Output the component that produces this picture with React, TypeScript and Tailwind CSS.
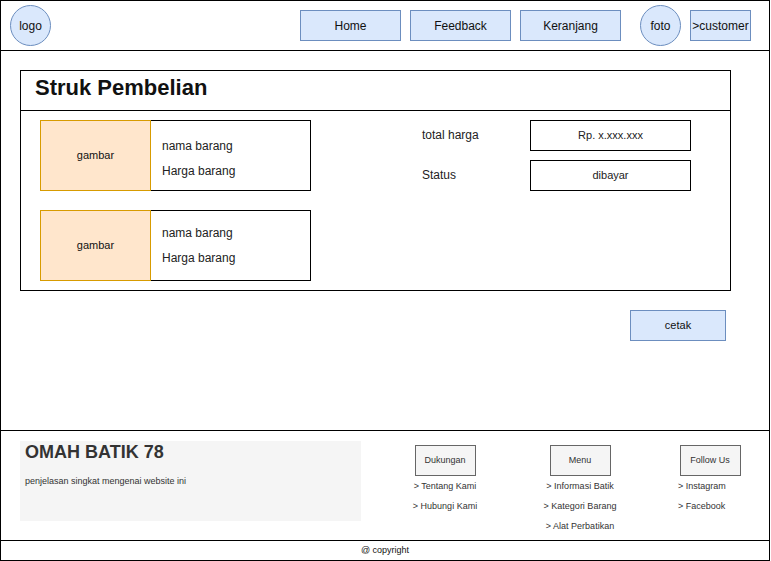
import React from "react";

const font = "font-['Liberation_Sans',Arial,Helvetica,sans-serif]";

function NavBtn({ label, w = "w-[101px]", ml }: { label: string; w?: string; ml: string }) {
  return (
    <div
      className={`${ml} ${w} h-[31px] shrink-0 border border-[#6c8ebf] bg-[#dae8fc] flex items-center justify-center text-[12px] text-[#111]`}
    >
      {label}
    </div>
  );
}

function Circle({ label, ml }: { label: string; ml: string }) {
  return (
    <div
      className={`${ml} w-[41px] h-[41px] shrink-0 rounded-full border border-[#6c8ebf] bg-[#dae8fc] flex items-center justify-center text-[12px] text-[#111]`}
    >
      {label}
    </div>
  );
}

function Item({ shift }: { shift: string }) {
  return (
    <div className="flex h-[71px]">
      <div className="w-[111px] h-[71px] border border-[#d79b00] bg-[#ffe6cc] flex items-center justify-center text-[11px] text-[#111]">
        gambar
      </div>
      <div
        className={`w-[160px] h-[71px] border-y border-r border-black flex flex-col justify-center pl-[11px] ${shift} text-[12px] leading-[25px] text-[#222]`}
      >
        <div>nama barang</div>
        <div>Harga barang</div>
      </div>
    </div>
  );
}

function FooterCol({
  title,
  links,
  ml,
  left,
}: {
  title: string;
  links: string[];
  ml: string;
  left?: boolean;
}) {
  return (
    <div className={`${ml} w-[100px] mt-[14px] flex flex-col items-center`}>
      <div className="w-[61px] h-[31px] border border-[#666666] bg-[#f5f5f5] flex items-center justify-center text-[9px] text-[#333]">
        {title}
      </div>
      <div className={left ? "self-stretch pl-[18px] flex flex-col items-start" : "flex flex-col items-center"}>
        {links.map((l) => (
          <div key={l} className="text-[9px] leading-[20px] text-[#333] whitespace-nowrap">
            {l}
          </div>
        ))}
      </div>
    </div>
  );
}

export default function App() {
  return (
    <div className={`${font} w-[770px] h-[561px] border border-black bg-white flex flex-col text-black`}>
      {/* Header */}
      <div className="h-[50px] shrink-0 border-b border-black flex items-center">
        <Circle label="logo" ml="ml-[9px]" />
        <NavBtn label="Home" ml="ml-[249px]" />
        <NavBtn label="Feedback" ml="ml-[9px]" />
        <NavBtn label="Keranjang" ml="ml-[9px]" />
        <Circle label="foto" ml="ml-[19px]" />
        <NavBtn label=">customer" w="w-[61px]" ml="ml-[9px]" />
      </div>

      {/* Main */}
      <div className="h-[379px] shrink-0 flex flex-col">
        <div className="ml-[19px] mt-[19px] w-[711px] h-[221px] border border-black flex flex-col">
          <div className="h-[40px] shrink-0 border-b border-black pl-[14px] pt-[4px]">
            <div className="text-[22px] font-bold leading-[26px] text-[#111]">Struk Pembelian</div>
          </div>
          <div className="flex pl-[19px] pt-[9px]">
            <div className="flex flex-col gap-[19px]">
              <Item shift="pt-[6px]" />
              <Item shift="" />
            </div>
            <div className="ml-[111px] flex flex-col gap-[9px]">
              <div className="flex items-center">
                <div className="w-[108px] text-[12px] text-[#222] pb-[2px]">total harga</div>
                <div className="w-[161px] h-[31px] border border-black flex items-center justify-center text-[11px] text-[#222]">
                  Rp. x.xxx.xxx
                </div>
              </div>
              <div className="flex items-center">
                <div className="w-[108px] text-[12px] text-[#222] pb-[2px]">Status</div>
                <div className="w-[161px] h-[31px] border border-black flex items-center justify-center text-[11px] text-[#222]">
                  dibayar
                </div>
              </div>
            </div>
          </div>
        </div>
        <div className="ml-[629px] mt-[19px] w-[96px] h-[31px] border border-[#6c8ebf] bg-[#dae8fc] flex items-center justify-center text-[11px] text-[#111]">
          cetak
        </div>
      </div>

      {/* Footer */}
      <div className="h-[110px] shrink-0 border-t border-black flex">
        <div className="ml-[19px] mt-[10px] w-[341px] h-[80px] bg-[#f5f5f5] pl-[5px] flex flex-col">
          <div className="text-[18px] font-bold leading-[22px] text-[#333]">OMAH BATIK 78</div>
          <div className="mt-[12px] text-[9px] leading-[12px] text-[#333]">penjelasan singkat mengenai website ini</div>
        </div>
        <FooterCol title="Dukungan" links={["> Tentang Kami", "> Hubungi Kami"]} ml="ml-[34px]" />
        <FooterCol
          title="Menu"
          links={["> Informasi Batik", "> Kategori Barang", "> Alat Perbatikan"]}
          ml="ml-[35px]"
        />
        <FooterCol title="Follow Us" links={["> Instagram", "> Facebook"]} ml="ml-[30px]" left />
      </div>

      {/* Copyright */}
      <div className="h-[20px] shrink-0 border-t border-black flex items-center justify-center text-[9px] text-[#111]">
        @ copyright
      </div>
    </div>
  );
}
